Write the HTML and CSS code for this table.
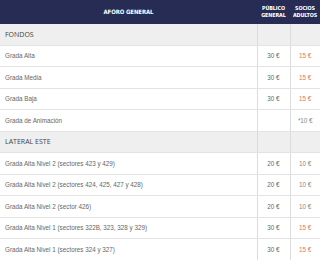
FILE: index.html
```html
<!DOCTYPE html>
<html>
<head>
<meta charset="utf-8">
<link rel="stylesheet" href="styles.css">
</head>
<body>
<table class="prices">
  <colgroup><col class="c-name"><col class="c-pub"><col class="c-soc"></colgroup>
  <thead>
    <tr class="head">
      <th class="h-main">AFORO GENERAL</th>
      <th>PÚBLICO<br>GENERAL</th>
      <th>SOCIOS<br>ADULTOS</th>
    </tr>
  </thead>
  <tbody>
    <tr class="section"><td>FONDOS</td><td></td><td></td></tr>
    <tr><td>Grada Alta</td><td class="p">30 €</td><td class="s">15 €</td></tr>
    <tr><td>Grada Media</td><td class="p">30 €</td><td class="s">15 €</td></tr>
    <tr><td>Grada Baja</td><td class="p">30 €</td><td class="s">15 €</td></tr>
    <tr><td>Grada de Animación</td><td class="p"></td><td class="s g">*10 €</td></tr>
    <tr class="section"><td>LATERAL ESTE</td><td></td><td></td></tr>
    <tr><td>Grada Alta Nivel 2 (sectores 423 y 429)</td><td class="p">20 €</td><td class="s g">10 €</td></tr>
    <tr><td>Grada Alta Nivel 2 (sectores 424, 425, 427 y 428)</td><td class="p">20 €</td><td class="s g">10 €</td></tr>
    <tr><td>Grada Alta Nivel 2 (sector 426)</td><td class="p">20 €</td><td class="s g">10 €</td></tr>
    <tr><td>Grada Alta Nivel 1 (sectores 322B, 323, 328 y 329)</td><td class="p">30 €</td><td class="s">15 €</td></tr>
    <tr><td>Grada Alta Nivel 1 (sectores 324 y 327)</td><td class="p">30 €</td><td class="s">15 €</td></tr>
  </tbody>
</table>
</body>
</html>
```
FILE: styles.css
```css
html, body {
  margin: 0;
  padding: 0;
  background: #fff;
}
.prices {
  width: 320px;
  border-collapse: collapse;
  table-layout: fixed;
  font-family: "Liberation Sans", Arial, sans-serif;
  font-size: 6.3px;
  color: #666;
}
.c-name { width: 257px; }
.c-pub { width: 33px; }
.c-soc { width: 30px; }
.head th {
  background: #272c55;
  color: #fff;
  height: 24px;
  padding: 0;
  font-family: "DejaVu Sans Condensed", "DejaVu Sans", sans-serif;
  font-weight: bold;
  font-size: 5.4px;
  line-height: 6.6px;
  text-align: center;
  letter-spacing: -0.1px;
}
.head th.h-main {
  font-size: 6px;
}
td {
  height: 20.5px;
  padding: 0 0 0 5px;
  border-bottom: 1.8px solid #e3e3e3;
  border-left: 1px solid #dcdcdc;
  vertical-align: middle;
  white-space: nowrap;
}
td:first-child { border-left: none; }
td.p, td.s {
  padding: 0;
  text-align: center;
}
td.s { color: #cf7d5c; }
td.s.g { color: #888; }
.section td {
  background: #efefef;
  color: #444;
  font-family: "Open Sans", "Liberation Sans", sans-serif;
  font-size: 7px;
}
```
